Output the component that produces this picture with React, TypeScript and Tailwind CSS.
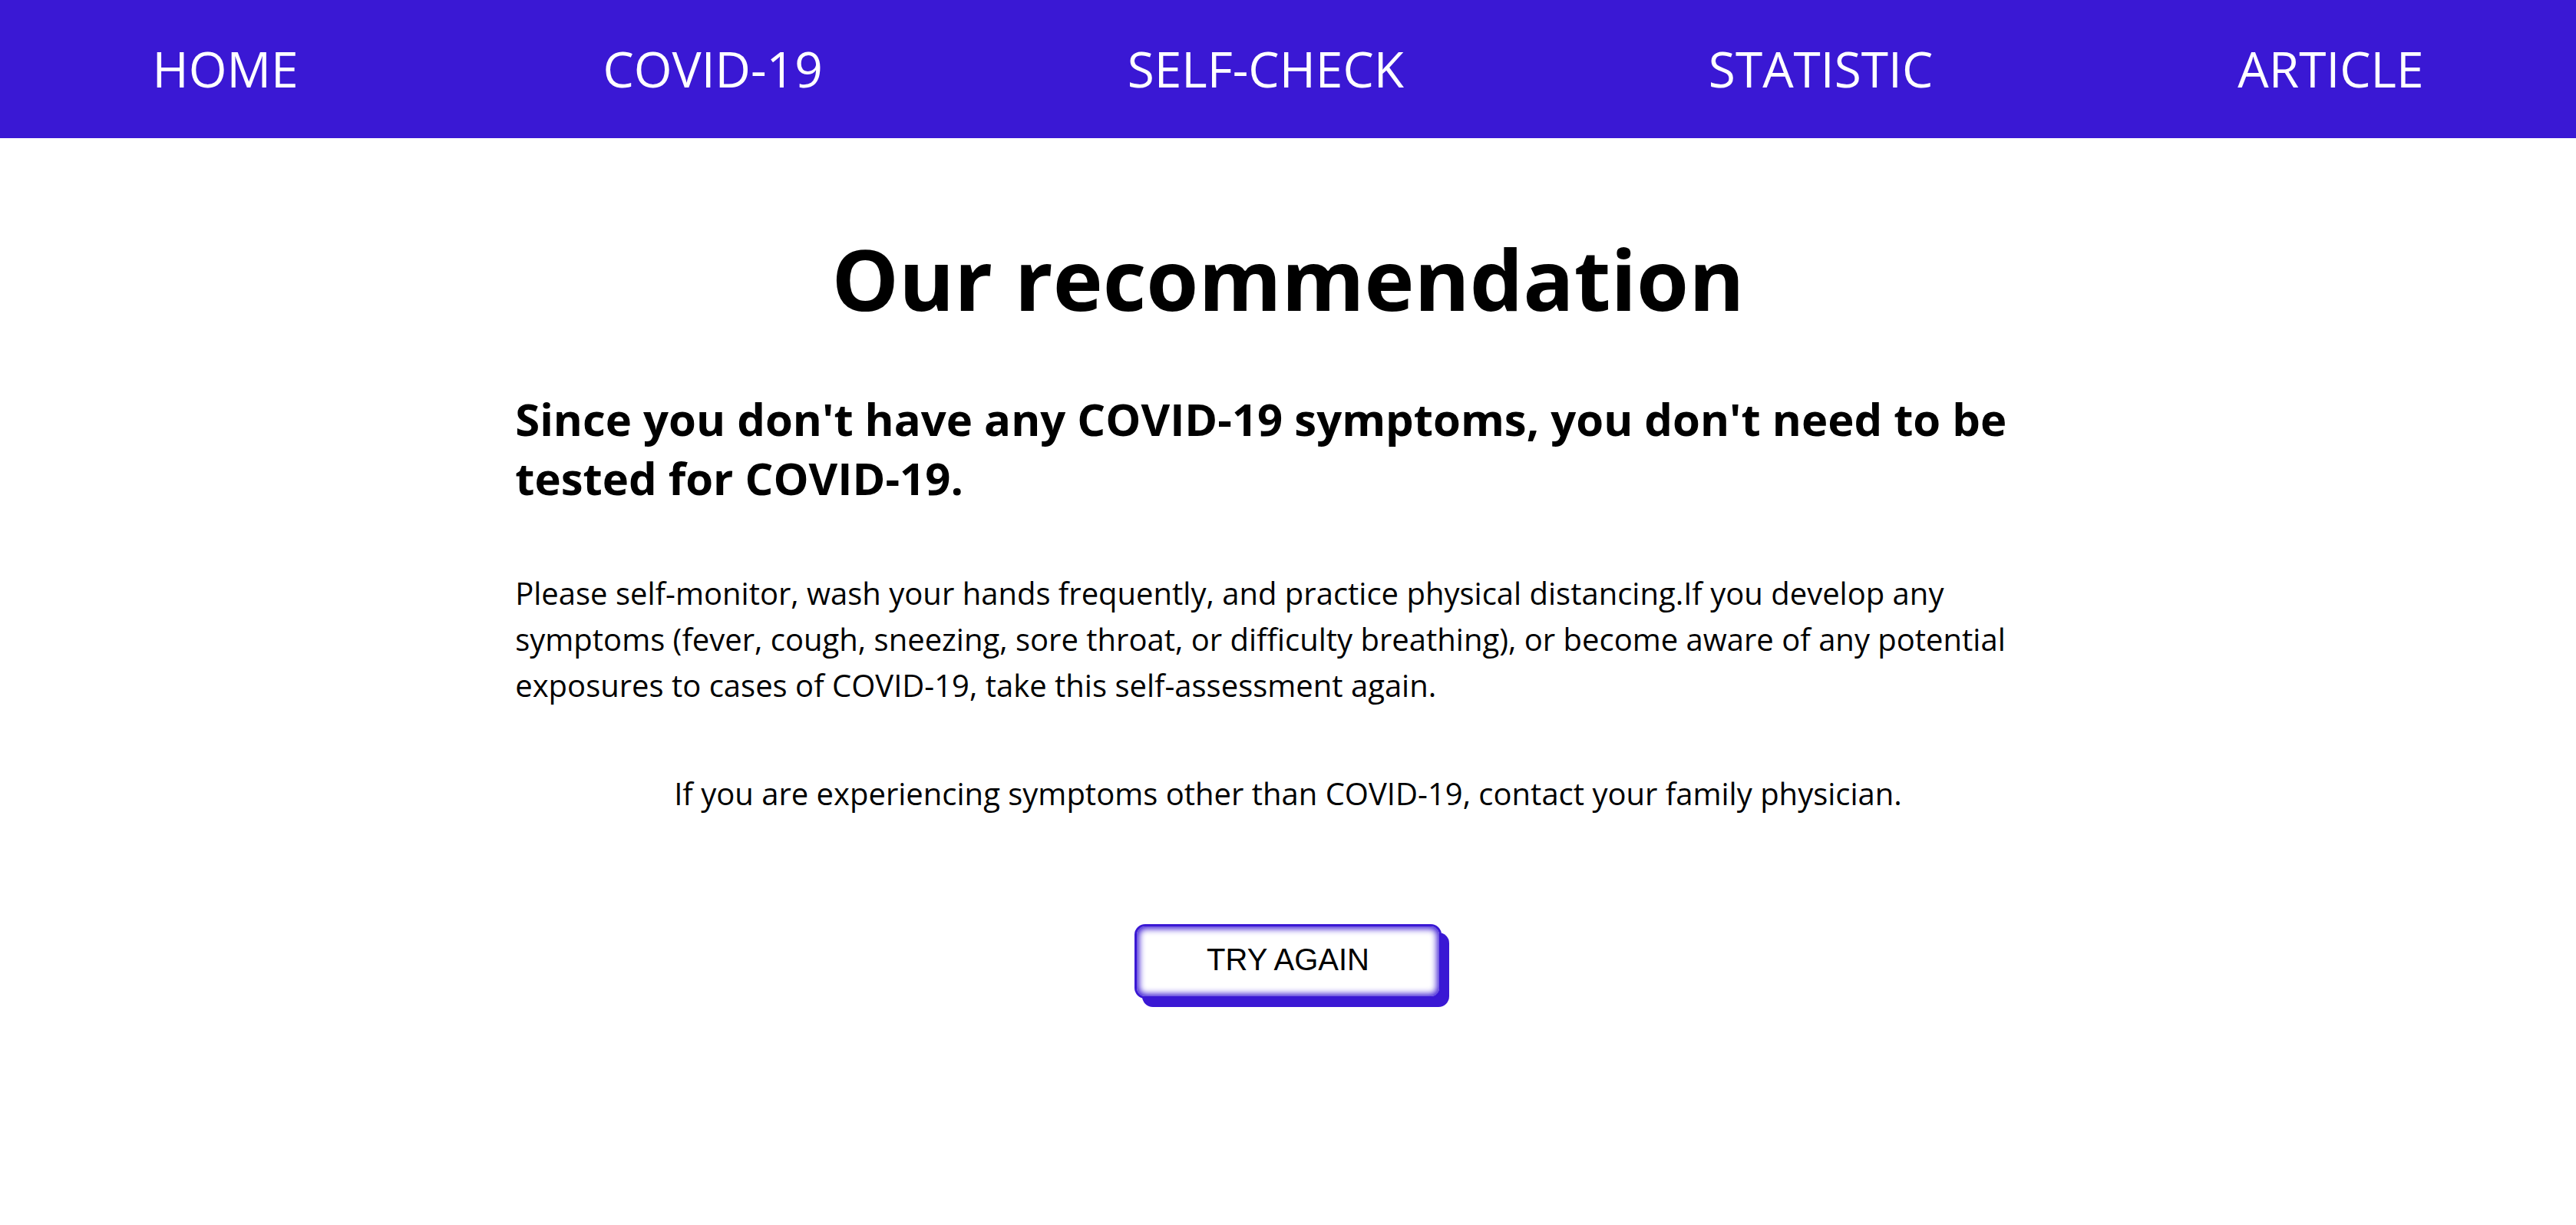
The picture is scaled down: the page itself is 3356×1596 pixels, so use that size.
export default function App() {
  const links = ["HOME", "COVID-19", "SELF-CHECK", "STATISTIC", "ARTICLE"];

  return (
    <div className="min-h-screen bg-white text-black" style={{ fontFamily: "'Open Sans', sans-serif" }}>
      <nav className="flex h-[180px] items-center justify-around bg-[#3a18d4]">
        {links.map((l) => (
          <a key={l} href="#" className="text-[64px] leading-none text-white">
            {l}
          </a>
        ))}
      </nav>

      <main className="mx-auto w-[60%]">
        <h1 className="mt-[108px] text-center text-[110px] font-bold leading-[1.362]">Our recommendation</h1>

        <h2 className="mt-[69px] text-[58px] font-bold leading-[77px]">
          Since you don't have any COVID-19 symptoms, you don't need to be tested for COVID-19.
        </h2>

        <p className="mt-[82px] text-[40px] leading-[60px]">
          Please self-monitor, wash your hands frequently, and practice physical distancing.If you develop any
          symptoms (fever, cough, sneezing, sore throat, or difficulty breathing), or become aware of any potential
          exposures to cases of COVID-19, take this self-assessment again.
        </p>

        <p className="mt-[81px] text-center text-[40px] leading-[60px]">
          If you are experiencing symptoms other than COVID-19, contact your family physician.
        </p>

        <div className="mt-[140px] flex justify-center">
          <button
            className="h-[97px] w-[400px] rounded-[14px] border-[3px] border-[#3a18d4] bg-white pb-[4px] text-[40px] text-black shadow-[inset_0_0_8px_3px_#3a18d4,10px_11px_0_0_#3a18d4]"
            style={{ fontFamily: "'Liberation Sans', Arial, sans-serif" }}
          >
            TRY AGAIN
          </button>
        </div>
      </main>
    </div>
  );
}
